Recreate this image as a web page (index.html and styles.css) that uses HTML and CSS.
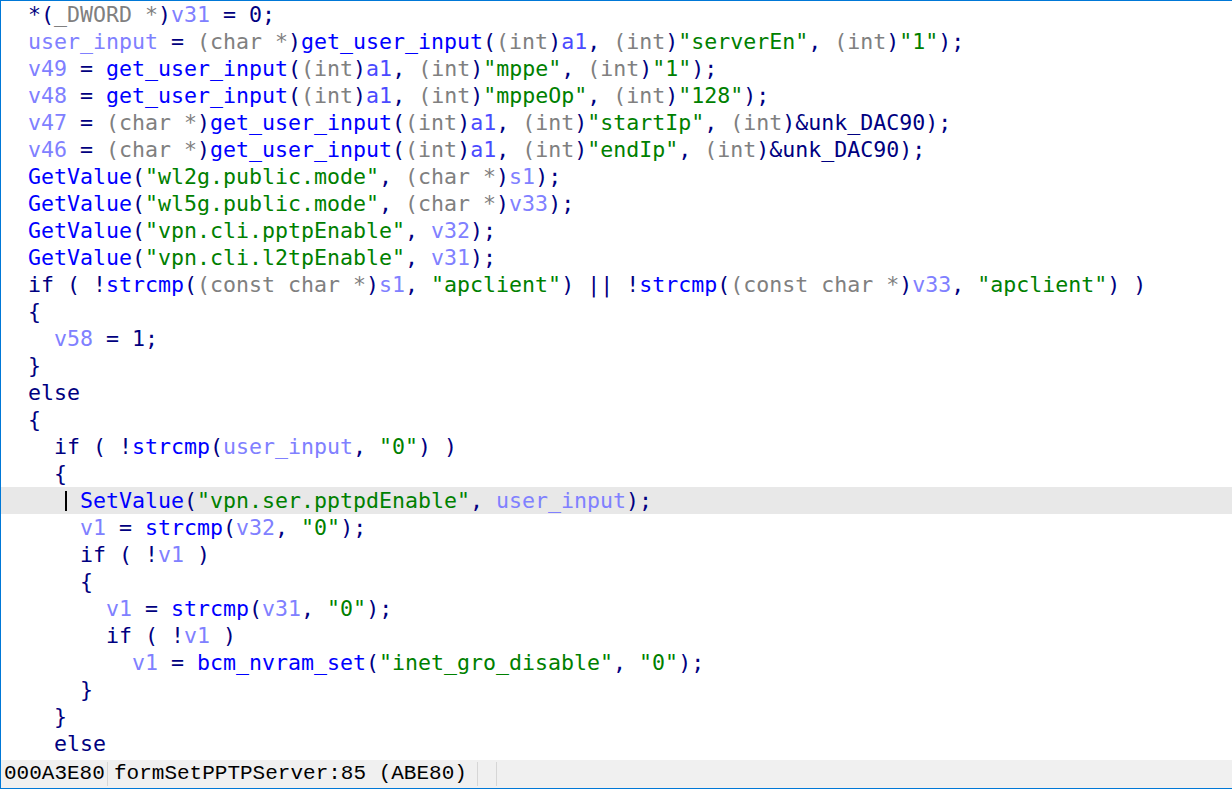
FILE: index.html
```html
<!DOCTYPE html>
<html>

<head>
    <meta charset="UTF-8">
    <title>Pseudocode-A</title>
    <link rel="stylesheet" href="styles.css">
</head>

<body>
    <div class="window">
        <div class="code">
<div class="ln">  *(<span class="t">_DWORD *</span>)<span class="v">v31</span> = 0;</div>
<div class="ln">  <span class="v">user_input</span> = <span class="t">(char *</span>)<span class="f">get_user_input</span>(<span class="t">(int</span>)<span class="a">a1</span>, <span class="t">(int</span>)<span class="s">"serverEn"</span>, <span class="t">(int</span>)<span class="s">"1"</span>);</div>
<div class="ln">  <span class="v">v49</span> = <span class="f">get_user_input</span>(<span class="t">(int</span>)<span class="a">a1</span>, <span class="t">(int</span>)<span class="s">"mppe"</span>, <span class="t">(int</span>)<span class="s">"1"</span>);</div>
<div class="ln">  <span class="v">v48</span> = <span class="f">get_user_input</span>(<span class="t">(int</span>)<span class="a">a1</span>, <span class="t">(int</span>)<span class="s">"mppeOp"</span>, <span class="t">(int</span>)<span class="s">"128"</span>);</div>
<div class="ln">  <span class="v">v47</span> = <span class="t">(char *</span>)<span class="f">get_user_input</span>(<span class="t">(int</span>)<span class="a">a1</span>, <span class="t">(int</span>)<span class="s">"startIp"</span>, <span class="t">(int</span>)&amp;unk_DAC90);</div>
<div class="ln">  <span class="v">v46</span> = <span class="t">(char *</span>)<span class="f">get_user_input</span>(<span class="t">(int</span>)<span class="a">a1</span>, <span class="t">(int</span>)<span class="s">"endIp"</span>, <span class="t">(int</span>)&amp;unk_DAC90);</div>
<div class="ln">  <span class="f">GetValue</span>(<span class="s">"wl2g.public.mode"</span>, <span class="t">(char *</span>)<span class="v">s1</span>);</div>
<div class="ln">  <span class="f">GetValue</span>(<span class="s">"wl5g.public.mode"</span>, <span class="t">(char *</span>)<span class="v">v33</span>);</div>
<div class="ln">  <span class="f">GetValue</span>(<span class="s">"vpn.cli.pptpEnable"</span>, <span class="v">v32</span>);</div>
<div class="ln">  <span class="f">GetValue</span>(<span class="s">"vpn.cli.l2tpEnable"</span>, <span class="v">v31</span>);</div>
<div class="ln">  if ( !<span class="f">strcmp</span>(<span class="t">(const char *</span>)<span class="v">s1</span>, <span class="s">"apclient"</span>) || !<span class="f">strcmp</span>(<span class="t">(const char *</span>)<span class="v">v33</span>, <span class="s">"apclient"</span>) )</div>
<div class="ln">  {</div>
<div class="ln">    <span class="v">v58</span> = 1;</div>
<div class="ln">  }</div>
<div class="ln">  else</div>
<div class="ln">  {</div>
<div class="ln">    if ( !<span class="f">strcmp</span>(<span class="v">user_input</span>, <span class="s">"0"</span>) )</div>
<div class="ln">    {</div>
<div class="ln cur">      <span class="f">SetValue</span>(<span class="s">"vpn.ser.pptpdEnable"</span>, <span class="v">user_input</span>);<span class="caret"></span></div>
<div class="ln">      <span class="v">v1</span> = <span class="f">strcmp</span>(<span class="v">v32</span>, <span class="s">"0"</span>);</div>
<div class="ln">      if ( !<span class="v">v1</span> )</div>
<div class="ln">      {</div>
<div class="ln">        <span class="v">v1</span> = <span class="f">strcmp</span>(<span class="v">v31</span>, <span class="s">"0"</span>);</div>
<div class="ln">        if ( !<span class="v">v1</span> )</div>
<div class="ln">          <span class="v">v1</span> = <span class="f">bcm_nvram_set</span>(<span class="s">"inet_gro_disable"</span>, <span class="s">"0"</span>);</div>
<div class="ln">      }</div>
<div class="ln">    }</div>
<div class="ln">    else</div>
        </div>

        <div class="status">
            <span class="cell addr">000A3E80</span>
            <span class="cell where">formSetPPTPServer:85 (ABE80)</span>
            <span class="cell blank"></span>
        </div>
    </div>
</body>

</html>
```

FILE: styles.css
```css
* {
    margin: 0;
    padding: 0;
    box-sizing: border-box;
}

body {
    background: #fff;
    overflow: hidden;
}

.window {
    width: 1232px;
    height: 789px;
    border-top: 1px solid #0078d7;
    border-left: 1px solid #0078d7;
    border-bottom: 1px solid #0078d7;
    display: flex;
    flex-direction: column;
    background: #fff;
}

.code {
    flex: 1;
    font-family: "DejaVu Sans Mono", monospace;
    font-size: 21.6px;
    line-height: 27px;
    color: #000080;
    overflow: hidden;
}

.ln {
    height: 27px;
    padding-left: 1px;
    white-space: pre;
}

.ln.cur {
    background: #e8e8e8;
    position: relative;
}

.caret {
    position: absolute;
    left: 64px;
    top: 4px;
    width: 2px;
    height: 20px;
    background: #000;
}

.t {
    color: #808080;
}

.f {
    color: #0000ff;
}

.v {
    color: #8080ff;
}

.a {
    color: #4a4aff;
}

.s {
    color: #008000;
}

.status {
    height: 28px;
    background: #f0f0f0;
    display: flex;
    font-family: "Liberation Mono", monospace;
    font-size: 21px;
    line-height: 24px;
    color: #000;
}

.cell {
    margin: 2px 0;
    border-right: 1px solid #d6d6d6;
    white-space: pre;
}

.addr {
    width: 107px;
    padding-left: 3px;
}

.where {
    width: 370px;
    padding-left: 6px;
}

.blank {
    width: 19px;
}
```
